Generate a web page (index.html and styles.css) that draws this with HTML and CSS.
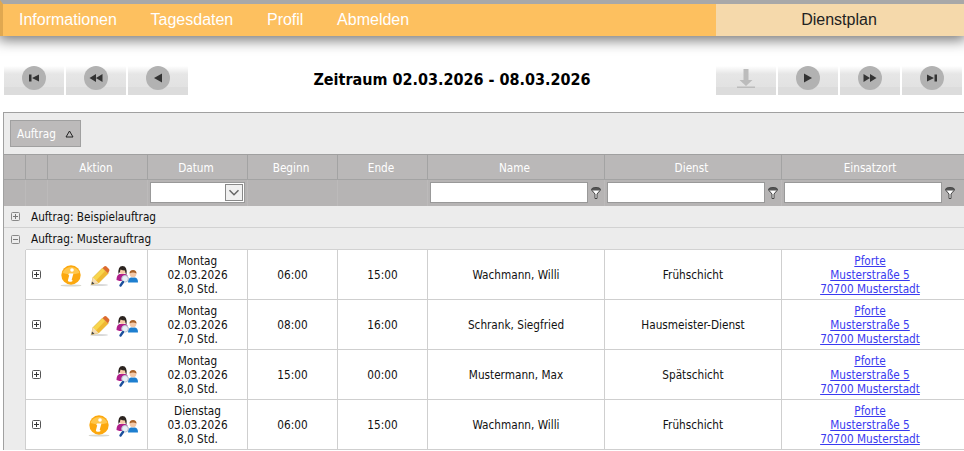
FILE: index.html
```html
<!DOCTYPE html>
<html lang="de">

<head>
  <meta charset="UTF-8" />
  <title>Dienstplan</title>
  <link rel="stylesheet" href="styles.css">
</head>

<body>
  <svg class="defs" width="0" height="0">
    <defs>
      <symbol id="i-info" viewBox="0 0 24 24">
        <ellipse cx="12" cy="21.500" rx="10.500" ry="1" fill="#d8d8d0" />
        <circle cx="12" cy="11" r="9.700" fill="#fca80e" />
        <path d="M3.500 9a8.600 7 0 0 1 17 0a14 6 0 0 1-17 0z" fill="#ffc64a" />
        <circle cx="13" cy="6" r="1.800" fill="#fff" />
        <path d="M10 9.500h4.400l-1.700 6.200q-.1.700.9.4l-.3 1.200q-2 .9-3.700.3-1-.5-.6-1.700l1.200-4.600-1-.2z" fill="#fff" />
      </symbol>
      <symbol id="i-edit" viewBox="0 0 24 24">
        <ellipse cx="12" cy="21" rx="9" ry="1" fill="#d8d8d8" />
        <path d="M4.500 20.500L6 13.500 15.500 4l5.500 5.500-9.500 9.500z" fill="#f8d54c" stroke="#d9a92e" stroke-width=".6" />
        <path d="M9 16.500L18 7l3 2.500-9.500 9.500z" fill="#efb832" />
        <path d="M15.500 4l2-1.700q1-.6 2 .1L22 5q.8 1 .2 2L21 9.500z" fill="#dc6a2e" />
        <path d="M4.500 20.500L6 13.500l5.500 5.500z" fill="#f3dcb8" />
        <path d="M4.500 20.500l.5-3 2.500 2.200z" fill="#444" />
      </symbol>
      <symbol id="i-users" viewBox="0 0 24 24">
        <path d="M1.500 16q0-5 3-6h6q3 1 3 6l-3 1h-6z" fill="#b01f8a" />
        <circle cx="7.500" cy="6.500" r="3.400" fill="#f3c9a8" />
        <path d="M3.500 10.500q-1-8.500 4-8.500t4 8.500q-1 0-1.500-4-2.500 0-4.500-1-.3 3-2 4.500z" fill="#2c2420" />
        <path d="M13 18.500q0-4.500 3-5h4q3 .5 3 5z" fill="#1d7fd0" />
        <circle cx="18" cy="9.800" r="3.400" fill="#f3c9a8" />
        <path d="M14.500 9.500q0-3.500 3.500-3.500t3.500 3.500q-3.500-2-7 0z" fill="#a8622a" />
        <circle cx="10" cy="14.800" r="3.300" fill="#e8eef5" stroke="#b8c0cc" />
        <path d="M8 18l-2.500 3.500" stroke="#1b4f9c" stroke-width="2.400" stroke-linecap="round" />
      </symbol>
      <symbol id="i-plus" viewBox="0 0 9 9">
        <rect x=".5" y=".5" width="8" height="8" rx="1" fill="#fff" stroke="#555" />
        <path d="M2 4.500h5M4.500 2v5" stroke="#333" />
      </symbol>
      <symbol id="i-plus-light" viewBox="0 0 9 9">
        <rect x=".5" y=".5" width="8" height="8" rx="1" fill="none" stroke="#888" />
        <path d="M2 4.500h5M4.500 2v5" stroke="#777" />
      </symbol>
      <symbol id="i-minus-light" viewBox="0 0 9 9">
        <rect x=".5" y=".5" width="8" height="8" rx="1" fill="none" stroke="#888" />
        <path d="M2 4.500h5" stroke="#777" />
      </symbol>
      <symbol id="i-funnel" viewBox="0 0 10 12">
        <ellipse cx="5" cy="2.500" rx="4.500" ry="2" fill="#555" stroke="#444" />
        <path d="M1 3.500L4 7v4.500h2V7l3-3.500" fill="#fff" stroke="#444" />
      </symbol>
    </defs>
  </svg>

  <header class="topbar">
    <nav class="mainnav">
      <a href="#">Informationen</a>
      <a href="#">Tagesdaten</a>
      <a href="#">Profil</a>
      <a href="#">Abmelden</a>
    </nav>
    <div class="pagename">Dienstplan</div>
  </header>

  <div class="toolbar">
    <div class="btn-group">
      <button class="nav-btn"><span class="round"><svg viewBox="0 0 24 24"><path d="M7 8.500h2.500v7H7zM17 8.500v7L10 12z" /></svg></span></button>
      <button class="nav-btn"><span class="round"><svg viewBox="0 0 24 24"><path d="M12 8v8l-6.500-4zM18.500 8v8L12 12z" /></svg></span></button>
      <button class="nav-btn"><span class="round"><svg viewBox="0 0 24 24"><path d="M16 7.500v9L8 12z" /></svg></span></button>
    </div>
    <h1 class="period">Zeitraum 02.03.2026 - 08.03.2026</h1>
    <div class="btn-group">
      <button class="nav-btn"><svg class="download" viewBox="0 0 24 24"><path d="M9.500 1h5v11h4L12 18 5.500 12h4zM3 18.500h18V20H3z" /></svg></button>
      <button class="nav-btn"><span class="round"><svg viewBox="0 0 24 24"><path d="M8 7.500v9l8-4.500z" /></svg></span></button>
      <button class="nav-btn"><span class="round"><svg viewBox="0 0 24 24"><path d="M5.500 8v8l6.500-4zM12 8v8l6.500-4z" /></svg></span></button>
      <button class="nav-btn"><span class="round"><svg viewBox="0 0 24 24"><path d="M7 8.500v7l7-3.500zM14.500 8.500H17v7h-2.500z" /></svg></span></button>
    </div>
  </div>

  <div class="grid">
    <div class="group-panel">
      <span class="group-chip">Auftrag <svg class="sort-mark" viewBox="0 0 9 8"><path d="M4.500 1L8 7H1z" fill="none" stroke="#222" /></svg></span>
    </div>
    <table>
      <colgroup>
        <col class="c-group">
        <col class="c-expand">
        <col class="c-action">
        <col class="c-date">
        <col class="c-time">
        <col class="c-time">
        <col class="c-wide">
        <col class="c-wide">
        <col class="c-place">
      </colgroup>
      <thead>
        <tr class="head-row">
          <th></th>
          <th></th>
          <th>Aktion</th>
          <th>Datum</th>
          <th>Beginn</th>
          <th>Ende</th>
          <th>Name</th>
          <th>Dienst</th>
          <th class="place">Einsatzort</th>
        </tr>
        <tr class="filter-row">
          <td></td>
          <td></td>
          <td></td>
          <td>
            <span class="combo"><span class="combo-arrow"><svg viewBox="0 0 10 10"><path d="M2 3.500l3 3 3-3" fill="none" stroke="#666" /></svg></span></span>
          </td>
          <td></td>
          <td></td>
          <td><span class="filter"><input type="text"><svg class="funnel"><use href="#i-funnel" /></svg></span></td>
          <td><span class="filter"><input type="text"><svg class="funnel"><use href="#i-funnel" /></svg></span></td>
          <td><span class="filter"><input type="text"><svg class="funnel"><use href="#i-funnel" /></svg></span></td>
        </tr>
      </thead>
      <tbody>
        <tr class="group-row">
          <td class="group-toggle"><svg class="tog"><use href="#i-plus-light" /></svg></td>
          <td colspan="8">Auftrag: Beispielauftrag</td>
        </tr>
        <tr class="group-row">
          <td class="group-toggle last"><svg class="tog"><use href="#i-minus-light" /></svg></td>
          <td colspan="8">Auftrag: Musterauftrag</td>
        </tr>
        <tr class="data-row">
          <td class="indent"></td>
          <td class="expand"><svg class="tog"><use href="#i-plus" /></svg></td>
          <td class="actions"><svg><use href="#i-info" /></svg><svg><use href="#i-edit" /></svg><svg><use href="#i-users" /></svg></td>
          <td>Montag<br>02.03.2026<br>8,0 Std.</td>
          <td>06:00</td>
          <td>15:00</td>
          <td>Wachmann, Willi</td>
          <td>Frühschicht</td>
          <td class="place"><a href="#">Pforte<br>Musterstraße 5<br>70700 Musterstadt</a></td>
        </tr>
        <tr class="data-row">
          <td class="indent"></td>
          <td class="expand"><svg class="tog"><use href="#i-plus" /></svg></td>
          <td class="actions"><svg><use href="#i-edit" /></svg><svg><use href="#i-users" /></svg></td>
          <td>Montag<br>02.03.2026<br>7,0 Std.</td>
          <td>08:00</td>
          <td>16:00</td>
          <td>Schrank, Siegfried</td>
          <td>Hausmeister-Dienst</td>
          <td class="place"><a href="#">Pforte<br>Musterstraße 5<br>70700 Musterstadt</a></td>
        </tr>
        <tr class="data-row">
          <td class="indent"></td>
          <td class="expand"><svg class="tog"><use href="#i-plus" /></svg></td>
          <td class="actions"><svg><use href="#i-users" /></svg></td>
          <td>Montag<br>02.03.2026<br>8,0 Std.</td>
          <td>15:00</td>
          <td>00:00</td>
          <td>Mustermann, Max</td>
          <td>Spätschicht</td>
          <td class="place"><a href="#">Pforte<br>Musterstraße 5<br>70700 Musterstadt</a></td>
        </tr>
        <tr class="data-row">
          <td class="indent"></td>
          <td class="expand"><svg class="tog"><use href="#i-plus" /></svg></td>
          <td class="actions"><svg><use href="#i-info" /></svg><svg><use href="#i-users" /></svg></td>
          <td>Dienstag<br>03.03.2026<br>8,0 Std.</td>
          <td>06:00</td>
          <td>15:00</td>
          <td>Wachmann, Willi</td>
          <td>Frühschicht</td>
          <td class="place"><a href="#">Pforte<br>Musterstraße 5<br>70700 Musterstadt</a></td>
        </tr>
      </tbody>
    </table>
  </div>
</body>

</html>
```

FILE: styles.css
```css
html,
body {
  margin: 0;
  padding: 0;
  height: 451px;
  overflow: hidden;
  background-color: white;
}

body {
  font-family: "DejaVu Sans Condensed", "DejaVu Sans", sans-serif;
  font-size: 11.7px;
}

.defs {
  position: absolute;
}

.topbar {
  display: flex;
  height: 32px;
  background-color: #fdc05f;
  border-top: 4px solid #a8a8a8;
  border-left: 3px solid #e0a850;
  box-shadow: 0 2px 14px 2px rgba(0, 0, 0, 0.55);
  font-family: "Liberation Sans", Arial, sans-serif;
  font-size: 16px;
}

.mainnav {
  flex: 1;
  display: flex;
  align-items: center;
  gap: 33.7px;
  padding-left: 16px;
}

.mainnav a {
  color: white;
  text-decoration: none;
}

.pagename {
  width: 248px;
  padding-right: 2px;
  box-sizing: border-box;
  line-height: 32px;
  text-align: center;
  background-color: #f5d9ab;
  color: #222;
}

.toolbar {
  display: flex;
  justify-content: space-between;
  align-items: center;
  padding: 30px 2px 0 4px;
  height: 29px;
}

.btn-group {
  display: flex;
  gap: 2px;
}

.nav-btn {
  display: flex;
  justify-content: center;
  padding: 0;
  width: 60px;
  height: 29px;
  border: none;
  background: linear-gradient(#ffffff 0, #e6e6e6 8px, #e2e2e2 21px, #dcdcdc 21px, #dcdcdc 29px);
}

.round {
  display: block;
  width: 24px;
  height: 24px;
  border-radius: 50%;
  background-color: #b2b2b2;
}

.round svg {
  display: block;
  width: 24px;
  height: 24px;
  fill: #333;
}

.download {
  width: 24px;
  height: 24px;
  margin-top: 2px;
  fill: #bcbcbc;
}

.period {
  margin: 0 0 2px 0;
  font-family: "DejaVu Sans Condensed", "DejaVu Sans", sans-serif;
  font-size: 16px;
  font-weight: bold;
  color: black;
}

.grid {
  margin: 17px 0 0 3px;
  border-top: 1px solid #a0a0a0;
  border-left: 1px solid #a0a0a0;
  background-color: #ececec;
}

.group-panel {
  display: flex;
  align-items: center;
  height: 41px;
  padding-left: 6px;
  border-bottom: 1px solid #a0a0a0;
}

.group-chip {
  display: flex;
  align-items: center;
  gap: 9px;
  box-sizing: border-box;
  width: 71px;
  height: 27px;
  padding-left: 6px;
  background-color: #bcbaba;
  border: 1px solid #a0a0a0;
  color: white;
}

.sort-mark {
  width: 9px;
  height: 8px;
}

table {
  width: 961px;
  table-layout: fixed;
  border-collapse: separate;
  border-spacing: 0;
}

.c-group {
  width: 22px;
}

.c-expand {
  width: 22px;
}

.c-action {
  width: 100px;
}

.c-date {
  width: 100px;
}

.c-time {
  width: 90px;
}

.c-wide {
  width: 177px;
}

.c-place {
  width: 183px;
}

th {
  height: 23px;
  padding: 1px 3px 0 0;
  background-color: #bab8b8;
  border-right: 1px solid #a3a3a3;
  border-bottom: 1px solid #a3a3a3;
  color: white;
  font-weight: normal;
  text-align: center;
}

.filter-row td {
  height: 24px;
  padding: 2px 0 0 0;
  vertical-align: top;
  background-color: #b6b4b4;
  border-right: 1px solid #bcbaba;
}

.filter {
  display: flex;
  align-items: center;
  gap: 3px;
  padding-left: 2px;
}

.filter input {
  box-sizing: border-box;
  width: 158px;
  height: 21px;
  margin: 0;
  padding: 0;
  border: 1px solid #999;
  background-color: white;
}

.funnel {
  width: 10px;
  height: 12px;
}

.combo {
  display: flex;
  justify-content: flex-end;
  box-sizing: border-box;
  width: 95px;
  height: 21px;
  margin-left: 2px;
  border: 1px solid #999;
  background-color: white;
}

.combo-arrow {
  box-sizing: border-box;
  width: 18px;
  margin: 1px;
  border: 1px solid #888;
  background-color: #f0f0f0;
}

.combo-arrow svg {
  display: block;
  width: 100%;
  height: 100%;
}

.group-row td {
  height: 21px;
  padding: 0;
  background-color: #ececec;
  border-bottom: 1px solid #d2d2d2;
  color: #111;
}

.group-row td:last-child {
  padding-left: 5px;
}

.group-row .group-toggle.last {
  border-bottom: none;
}

.group-row .group-toggle {
  text-align: center;
}

.tog {
  display: block;
  width: 9px;
  height: 9px;
  margin: 0 auto;
}

.data-row td {
  height: 49px;
  padding: 0;
  background-color: white;
  border-right: 1px solid #cfcfcf;
  border-bottom: 1px solid #cfcfcf;
  color: #111;
  line-height: 14px;
  text-align: center;
}

.data-row .expand {
  padding-right: 1px;
  border-right: none;
}

.data-row .indent {
  background-color: #ececec;
  border-bottom: none;
}

.data-row .actions {
  height: 47px;
  padding: 2px 8px 0 0;
  font-size: 0;
  line-height: 0;
  text-align: right;
  white-space: nowrap;
}

.actions svg {
  width: 24px;
  height: 24px;
  margin-left: 4px;
  vertical-align: middle;
}

th.place,
.data-row .place {
  padding-right: 6px;
}

.data-row a {
  color: #3a3af0;
}
```
